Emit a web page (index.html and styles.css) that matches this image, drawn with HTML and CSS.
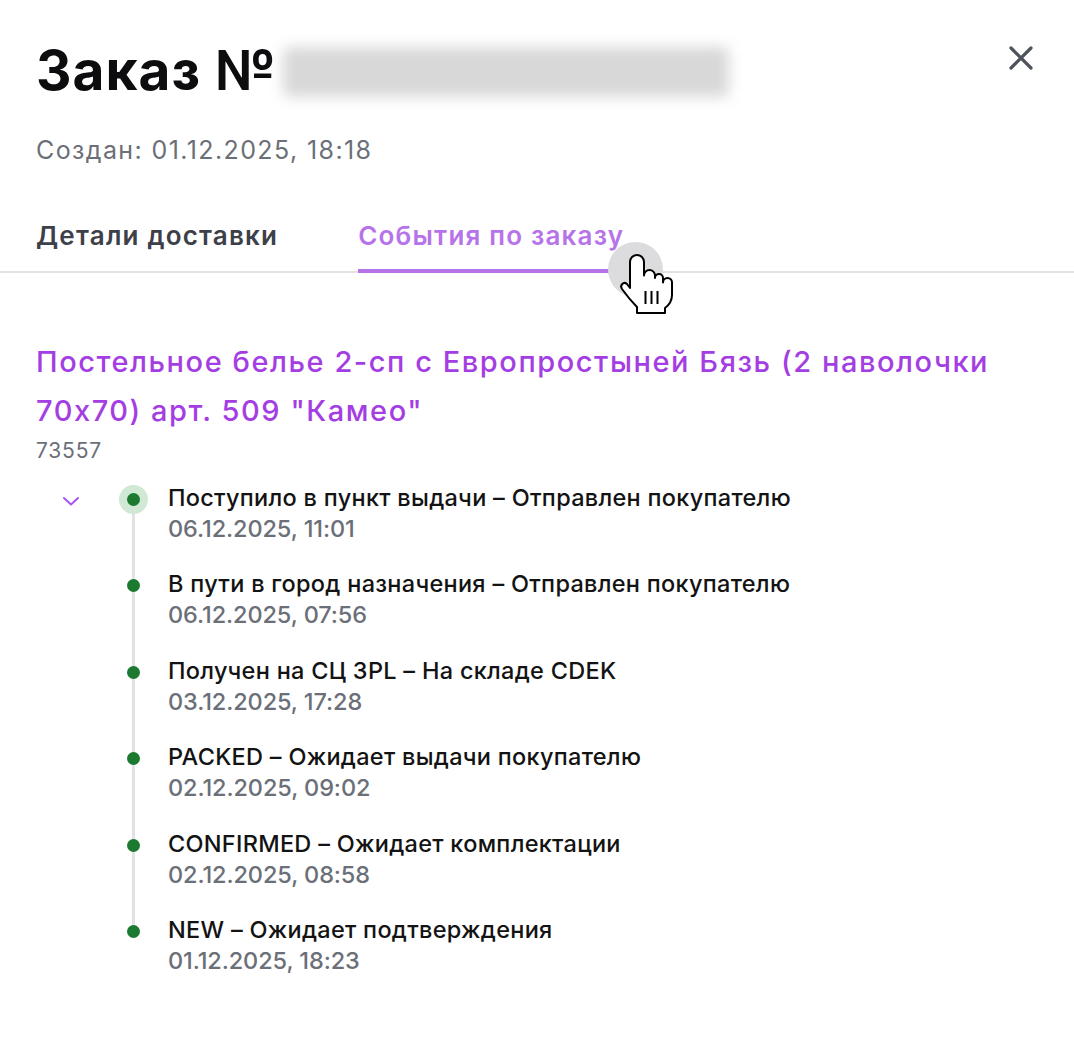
FILE: index.html
```html
<!DOCTYPE html>
<html lang="ru">
<head>
<meta charset="utf-8">
<title>Заказ</title>
<link rel="stylesheet" href="styles.css">
</head>
<body>
<div class="panel">
  <header class="head">
    <div class="title-row">
      <h1 class="title">Заказ №</h1>
      <div class="redacted"></div>
    </div>
    <button class="close" aria-label="Закрыть">
      <svg width="26" height="26" viewBox="0 0 26 26"><path d="M3 3 L23 23 M23 3 L3 23" stroke="#4d525b" stroke-width="3.2" stroke-linecap="round"/></svg>
    </button>
  </header>
  <div class="created">Создан: 01.12.2025, 18:18</div>

  <nav class="tabs">
    <div class="tab">Детали доставки</div>
    <div class="tab active">События по заказу</div>
  </nav>

  <section class="product">
    <a class="product-name">Постельное белье 2-сп с Европростыней Бязь (2 наволочки 70x70) арт. 509 "Камео"</a>
    <div class="product-id">73557</div>
  </section>

  <ol class="events">
    <li class="event first">
      <span class="toggle"><svg width="18" height="12" viewBox="0 0 18 12"><path d="M2 3 L9 9.5 L16 3" fill="none" stroke="#a855f7" stroke-width="2" stroke-linecap="round" stroke-linejoin="round"/></svg></span>
      <span class="mark"><span class="dot halo"></span></span>
      <div class="info"><div class="ev-title">Поступило в пункт выдачи – Отправлен покупателю</div><div class="ev-date">06.12.2025, 11:01</div></div>
    </li>
    <li class="event">
      <span class="toggle"></span>
      <span class="mark"><span class="dot"></span></span>
      <div class="info"><div class="ev-title">В пути в город назначения – Отправлен покупателю</div><div class="ev-date">06.12.2025, 07:56</div></div>
    </li>
    <li class="event">
      <span class="toggle"></span>
      <span class="mark"><span class="dot"></span></span>
      <div class="info"><div class="ev-title">Получен на СЦ 3PL – На складе CDEK</div><div class="ev-date">03.12.2025, 17:28</div></div>
    </li>
    <li class="event">
      <span class="toggle"></span>
      <span class="mark"><span class="dot"></span></span>
      <div class="info"><div class="ev-title">PACKED – Ожидает выдачи покупателю</div><div class="ev-date">02.12.2025, 09:02</div></div>
    </li>
    <li class="event">
      <span class="toggle"></span>
      <span class="mark"><span class="dot"></span></span>
      <div class="info"><div class="ev-title">CONFIRMED – Ожидает комплектации</div><div class="ev-date">02.12.2025, 08:58</div></div>
    </li>
    <li class="event last">
      <span class="toggle"></span>
      <span class="mark"><span class="dot"></span></span>
      <div class="info"><div class="ev-title">NEW – Ожидает подтверждения</div><div class="ev-date">01.12.2025, 18:23</div></div>
    </li>
  </ol>

  <div class="cursor-halo"></div>
  <svg class="cursor-hand" width="56" height="62" viewBox="-2 -2 56 62">
    <path d="M10 33 V7 a7 7 0 0 1 14 0 V20.5 a5.5 5.5 0 0 1 11 0 V23 a4 4 0 0 1 8 0 V27.5 a4.5 4.5 0 0 1 9 0 V40 c0 6 -3 10 -7 13 V58 H17 V52 c-4 -4 -10 -11 -15 -18 c-2.5 -3.5 1.5 -8 5 -5 Z" fill="#fff" stroke="#000" stroke-width="2" stroke-linejoin="round"/>
    <path d="M25.5 36 V49 M31.5 36 V49 M37.5 36 V49" stroke="#000" stroke-width="2"/>
  </svg>
</div>
</body>
</html>
```

FILE: styles.css
```css
* { box-sizing: border-box; }
html, body { margin: 0; padding: 0; background: #fff; }
body {
  font-family: Inter, "Noto Sans", "DejaVu Sans", sans-serif;
  color: #111;
  width: 1074px;
  height: 1038px;
  overflow: hidden;
}
.panel { position: relative; padding-top: 34px; height: 1038px; }
.head {
  display: flex;
  justify-content: space-between;
  align-items: flex-start;
  padding: 0 40px 0 36px;
}
.title-row { display: flex; align-items: center; gap: 6px; height: 72px; }
.title {
  margin: 0;
  font-size: 55px;
  font-weight: 700;
  letter-spacing: 1px;
  line-height: 72px;
  color: #0d0d0f;
}
.redacted {
  width: 446px;
  height: 50px;
  background: #d8d8d8;
  border-radius: 6px;
  filter: blur(7px);
  margin-top: 4px;
}
.close {
  border: 0;
  background: none;
  padding: 0;
  margin-top: 11px;
  width: 26px;
  height: 26px;
  cursor: pointer;
}
.created {
  padding: 0 36px;
  margin-top: 29px;
  font-size: 25px;
  letter-spacing: 1.4px;
  line-height: 30px;
  color: #6b6f78;
}
.tabs {
  display: flex;
  gap: 80px;
  padding: 0 36px;
  margin-top: 56px;
  border-bottom: 2px solid #e3e3e6;
}
.tab {
  font-size: 26px;
  font-weight: 600;
  letter-spacing: 1.2px;
  line-height: 30px;
  color: #3d4048;
  padding-bottom: 18px;
  border-bottom: 4px solid transparent;
  margin-bottom: -2px;
}
.tab.active { color: #b673ea; border-bottom-color: #b673ea; }
.cursor-halo {
  position: absolute;
  left: 608px;
  top: 242px;
  width: 55px;
  height: 55px;
  border-radius: 50%;
  background: #dcdcde;
}
.cursor-hand { position: absolute; left: 618px; top: 253px; }
.product { padding: 0 36px; margin-top: 64px; }
.product-name {
  display: block;
  font-size: 29px;
  letter-spacing: 1.55px;
  line-height: 49px;
  color: #a43ee3;
  font-weight: 500;
}
.product-id {
  font-size: 21px;
  letter-spacing: 0.8px;
  line-height: 26px;
  color: #6b6f78;
  margin-top: 3px;
}
.events {
  list-style: none;
  margin: 18px 0 0;
  padding: 0 0 0 36px;
}
.event {
  display: flex;
  padding-bottom: 24.4px;
}
.toggle {
  width: 70px;
  height: 31px;
  display: flex;
  align-items: center;
  justify-content: center;
  padding-top: 6px;
}
.mark {
  position: relative;
  width: 54px;
  display: flex;
  justify-content: center;
  height: 31px;
  align-items: center;
}
.mark::after {
  content: "";
  position: absolute;
  left: 25.5px;
  top: 18px;
  width: 3px;
  height: 87px;
  background: #e2e2e5;
}
.event.last .mark::after { display: none; }
.dot {
  width: 13px;
  height: 13px;
  border-radius: 50%;
  background: #1b7a30;
  position: relative;
  z-index: 1;
  margin-top: 4px;
}
.dot.halo { box-shadow: 0 0 0 8px #d0e8d4; }
.info { margin-left: 8px; }
.ev-title { font-size: 23.5px; font-weight: 450; letter-spacing: 0.28px; line-height: 31px; color: #131313; }
.ev-date { font-size: 23.5px; font-weight: 450; letter-spacing: -0.1px; line-height: 31px; color: #6b6f78; }
```
